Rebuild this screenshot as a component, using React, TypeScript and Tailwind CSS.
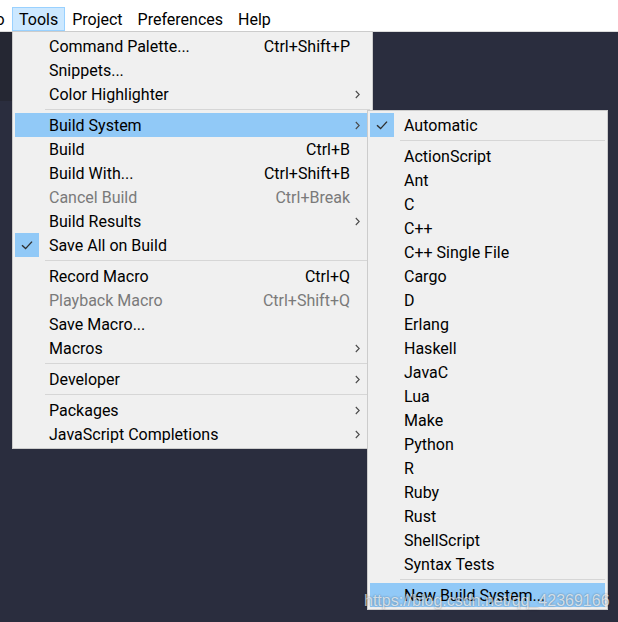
type Item =
  | { sep: true }
  | {
      sep?: false
      label: string
      shortcut?: string
      sub?: boolean
      checked?: boolean
      disabled?: boolean
      active?: boolean
    }

const toolsItems: Item[] = [
  { label: 'Command Palette...', shortcut: 'Ctrl+Shift+P' },
  { label: 'Snippets...' },
  { label: 'Color Highlighter', sub: true },
  { sep: true },
  { label: 'Build System', sub: true, active: true },
  { label: 'Build', shortcut: 'Ctrl+B' },
  { label: 'Build With...', shortcut: 'Ctrl+Shift+B' },
  { label: 'Cancel Build', shortcut: 'Ctrl+Break', disabled: true },
  { label: 'Build Results', sub: true },
  { label: 'Save All on Build', checked: true },
  { sep: true },
  { label: 'Record Macro', shortcut: 'Ctrl+Q' },
  { label: 'Playback Macro', shortcut: 'Ctrl+Shift+Q', disabled: true },
  { label: 'Save Macro...' },
  { label: 'Macros', sub: true },
  { sep: true },
  { label: 'Developer', sub: true },
  { sep: true },
  { label: 'Packages', sub: true },
  { label: 'JavaScript Completions', sub: true },
]

const buildSystems: Item[] = [
  { label: 'Automatic', checked: true },
  { sep: true },
  ...[
    'ActionScript',
    'Ant',
    'C',
    'C++',
    'C++ Single File',
    'Cargo',
    'D',
    'Erlang',
    'Haskell',
    'JavaC',
    'Lua',
    'Make',
    'Python',
    'R',
    'Ruby',
    'Rust',
    'ShellScript',
    'Syntax Tests',
  ].map((label) => ({ label })),
  { sep: true },
  { label: 'New Build System...', active: true },
]

function Check() {
  return (
    <svg width="12" height="10" viewBox="0 0 12 10" fill="none">
      <path d="M1 5.2l3.6 3.4L11 1.6" stroke="#2f2f2f" strokeWidth="1.4" />
    </svg>
  )
}

function Chevron() {
  return (
    <svg width="5" height="9" viewBox="0 0 5 9" fill="none">
      <path d="M0.8 1l3.4 3.5L0.8 8" stroke="#4a4a4a" strokeWidth="1.1" />
    </svg>
  )
}

function MenuRows({ items }: { items: Item[] }) {
  return (
    <>
      {items.map((it, i) =>
        it.sep ? (
          <div key={i} className="mx-[2px] flex h-[7px] items-center pl-[30px]">
            <div className="h-px w-full bg-[#d6d6d6]" />
          </div>
        ) : (
          <div
            key={i}
            className={`mx-[2px] flex h-[24px] items-center ${it.active ? 'bg-[#91c9f7]' : ''} ${
              it.disabled ? 'text-[#7a7a7a]' : 'text-black'
            }`}
          >
            <div className="flex w-[34px] shrink-0 items-center">
              {it.checked && (
                <div className="flex h-[24px] w-[24px] items-center justify-center bg-[#91c9f7]">
                  <Check />
                </div>
              )}
            </div>
            <span className="flex-1 whitespace-nowrap pt-[2px] leading-none">{it.label}</span>
            {it.shortcut && <span className="whitespace-nowrap pt-[2px] leading-none">{it.shortcut}</span>}
            <div className="flex w-[20px] shrink-0 items-center pl-[5px]">{it.sub && <Chevron />}</div>
          </div>
        ),
      )}
    </>
  )
}

export default function App() {
  return (
    <div className="relative h-[622px] w-[618px] overflow-hidden bg-[#2a2d3e] font-['Roboto',sans-serif] text-[16px]">
      {/* menu bar */}
      <div className="flex h-[32px] items-end border-b border-[#dcdcdc] bg-white">
        <div className="ml-[-4.5px] flex h-[24px] items-center">
          <span className="pt-[2px] leading-none">o</span>
        </div>
        <div className="ml-[7.4px] flex h-[24px] items-center border border-[#99d1ff] bg-[#cce8ff] px-[6px]">
          <span className="pt-[2px] leading-none">Tools</span>
        </div>
        <div className="flex h-[24px] items-center">
          <span className="ml-[7px] pt-[2px] leading-none">Project</span>
          <span className="ml-[15px] pt-[2px] leading-none">Preferences</span>
          <span className="ml-[15px] pt-[2px] leading-none">Help</span>
        </div>
      </div>

      {/* editor backdrop */}
      <div className="flex">
        <div className="h-[69px] w-[12px] bg-[#252733]" />
      </div>

      {/* Tools menu */}
      <div className="absolute left-[12px] top-[31px] w-[361px] border border-[#cccccc] bg-[#f0f0f0] py-[2px]">
        <MenuRows items={toolsItems} />
      </div>

      {/* Build System submenu */}
      <div className="absolute left-[367px] top-[110px] w-[241px] border border-[#cccccc] bg-[#f0f0f0] py-[2px]">
        <MenuRows items={buildSystems} />
      </div>

      {/* watermark */}
      <div className="absolute left-[364px] top-[590px] whitespace-nowrap font-['Liberation_Sans',sans-serif] text-[16px] leading-[22px] text-white/70 [text-shadow:0_0_2px_rgba(0,0,0,0.45)]">
        https://blog.csdn.net/qq_42369166
      </div>
    </div>
  )
}
